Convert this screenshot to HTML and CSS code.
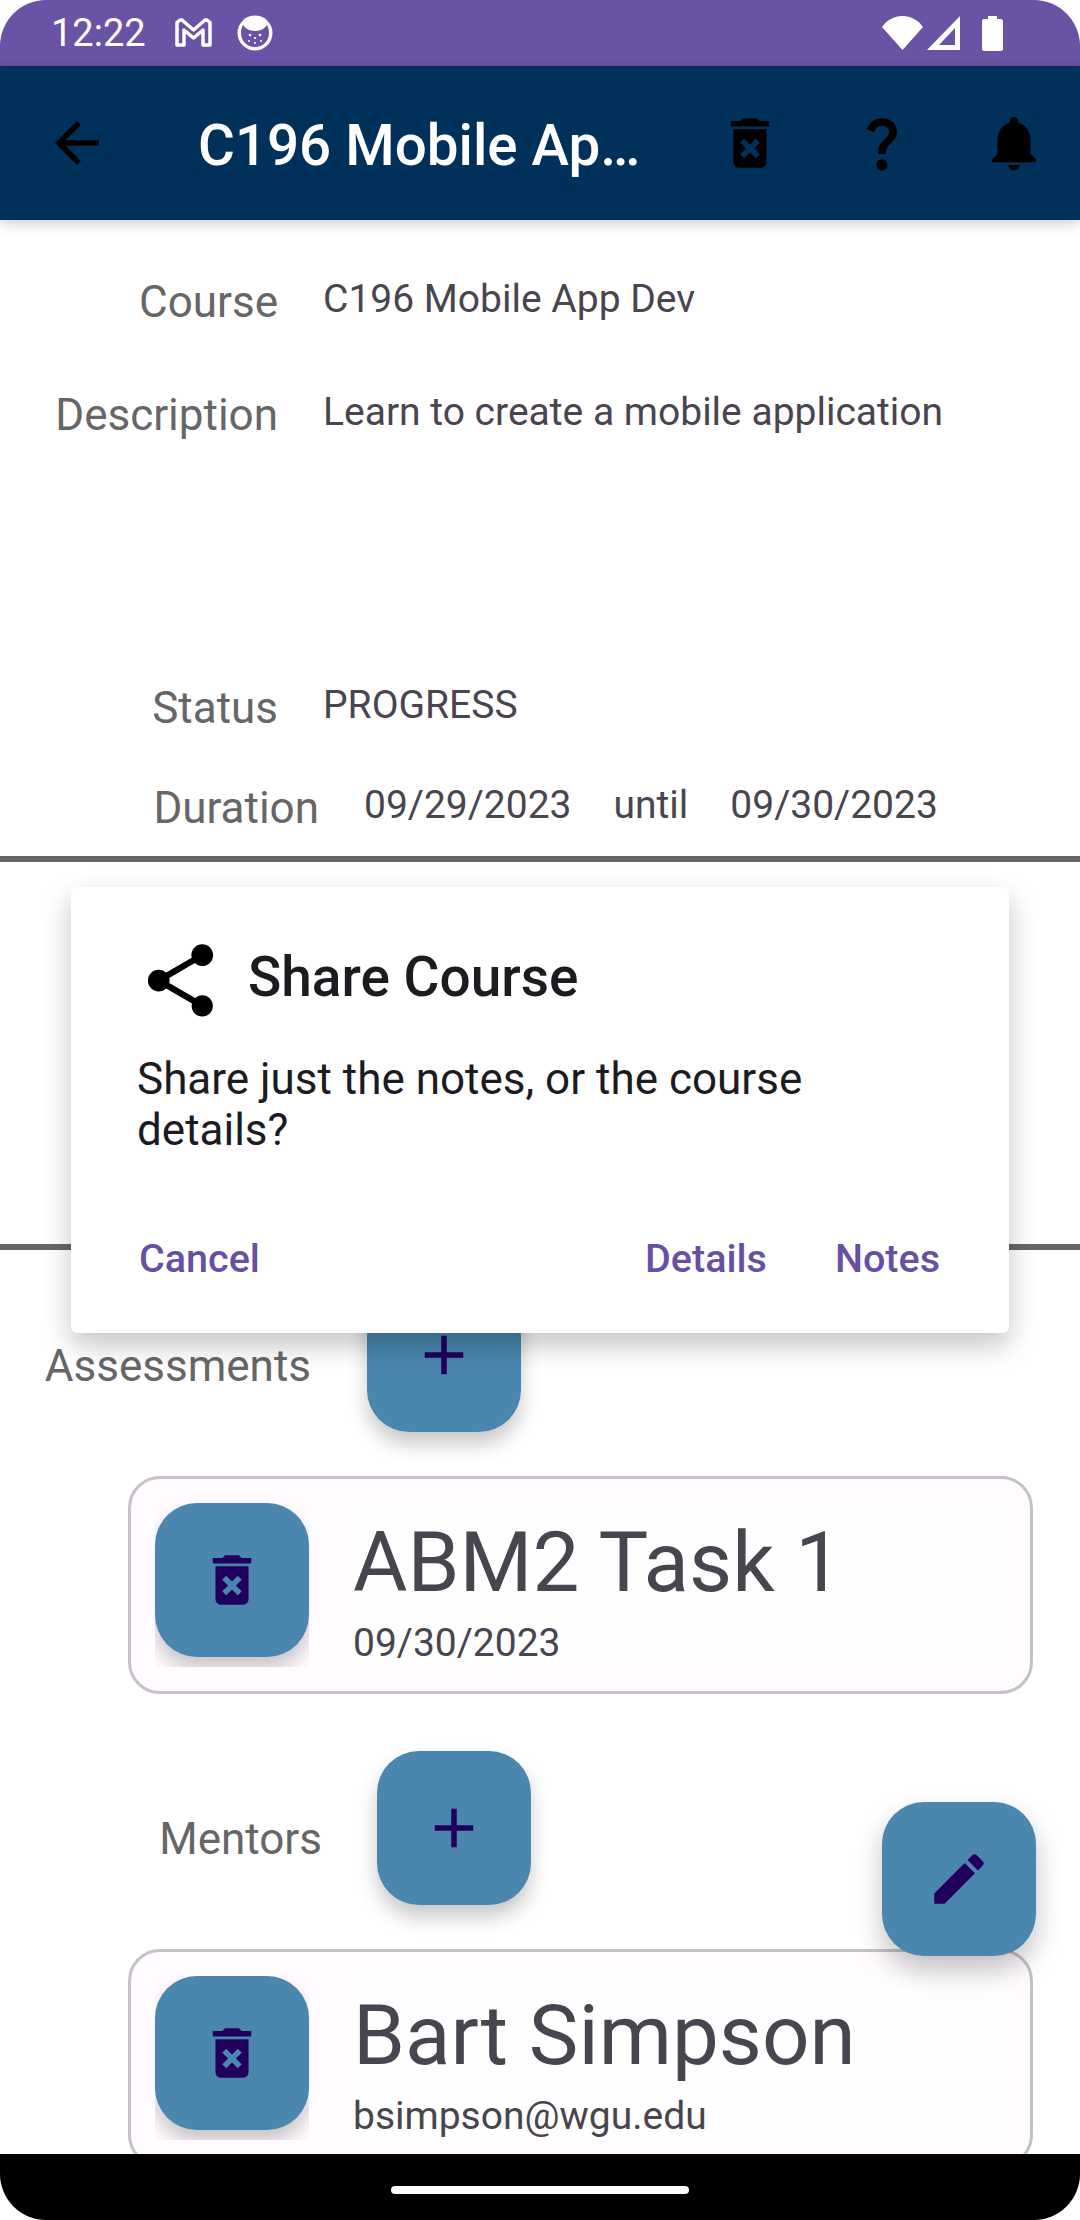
FILE: index.html
```html
<!DOCTYPE html>
<html lang="en">
<head>
  <meta charset="UTF-8">
  <title>C196 Mobile App Dev</title>
  <link rel="stylesheet" href="styles.css">
</head>
<body>

<div class="screen">
  <div class="status-bar">
    <span class="clock">12:22</span>
    <svg class="gmail" viewBox="0 0 37 29"><path d="M2 27V4.500L5 2h2l11.500 10L30 2h2l3 2.500V27h-7V12l-9.500 8L9 12v15z" fill="none" stroke="#fff" stroke-width="3.500" stroke-linejoin="round"/></svg>
    <svg class="cat" viewBox="0 0 36 36"><circle cx="18" cy="18" r="17.500" fill="#fff"/><path d="M4 18c0-3 .7-6 2-8 2 3 6 6 12 6s10-3 12-6c1.300 2 2 5 2 8 0 8-6 14-14 14S4 26 4 18z" fill="#6a52a5"/><circle cx="13" cy="20" r="1.300" fill="#fff"/><circle cx="23" cy="20" r="1.300" fill="#fff"/><circle cx="18" cy="23" r="1.100" fill="#fff"/><circle cx="12" cy="26" r="1" fill="#fff"/><circle cx="24" cy="26" r="1" fill="#fff"/><circle cx="18" cy="28" r="1" fill="#fff"/></svg>
    <span class="status-right">
      <svg class="wifi" viewBox="0 0 41 34"><path d="M0 11C5 4 12 0 20.500 0S36 4 41 11L20.500 34z" fill="#fff"/></svg>
      <svg class="signal" viewBox="0 0 34 34"><path d="M33 0v34H0zM28 12L12 29h16z" fill="#fff" fill-rule="evenodd"/></svg>
      <svg class="battery" viewBox="0 0 21 35"><path d="M6 0h9v3h4c1 0 2 1 2 2v28c0 1-1 2-2 2H2c-1 0-2-1-2-2V5c0-1 1-2 2-2h4z" fill="#fff"/></svg>
    </span>
  </div>

  <header class="toolbar">
    <svg class="icon back" viewBox="0 0 24 24"><path d="M20 11H7.830l5.590-5.590L12 4l-8 8 8 8 1.410-1.410L7.830 13H20v-2z"/></svg>
    <div class="toolbar-title">C196 Mobile Ap…</div>
    <div class="toolbar-action">
      <svg class="icon" viewBox="0 0 24 24"><path d="M6 19c0 1.100.9 2 2 2h8c1.100 0 2-.9 2-2V7H6v12zm2.460-7.120l1.410-1.410L12 12.590l2.120-2.120 1.410 1.410L13.410 14l2.120 2.120-1.410 1.410L12 15.410l-2.120 2.120-1.410-1.410L10.590 14l-2.130-2.120zM15.500 4l-1-1h-5l-1 1H5v2h14V4z"/></svg>
    </div>
    <div class="toolbar-action">
      <svg class="icon" viewBox="0 0 24 24"><path d="M11.070 12.850c.77-1.390 2.250-2.210 3.110-3.440.91-1.290.4-3.700-2.180-3.700-1.690 0-2.520 1.280-2.870 2.340L6.540 6.960C7.250 4.830 9.180 3 11.990 3c2.350 0 3.960 1.070 4.780 2.410.7 1.150 1.110 3.300.03 4.900-1.200 1.770-2.350 2.310-2.970 3.450-.25.46-.35.76-.35 2.240h-2.890c-.01-.78-.13-2.050.48-3.150zM14 20c0 1.100-.9 2-2 2s-2-.9-2-2 .9-2 2-2 2 .9 2 2z"/></svg>
    </div>
    <div class="toolbar-action">
      <svg class="icon" viewBox="0 0 24 24"><path d="M12 22c1.100 0 2-.9 2-2h-4c0 1.100.9 2 2 2zm6-6v-5c0-3.070-1.630-5.640-4.500-6.320V4c0-.83-.67-1.500-1.500-1.500s-1.500.67-1.500 1.500v.68C7.640 5.360 6 7.920 6 11v5l-2 2v1h16v-1l-2-2z"/></svg>
    </div>
  </header>

  <main class="content">
    <section class="details">
      <div class="row">
        <div class="label">Course</div>
        <div class="value">C196 Mobile App Dev</div>
      </div>
      <div class="row row-desc">
        <div class="label">Description</div>
        <div class="value">Learn to create a mobile application</div>
      </div>
      <div class="row">
        <div class="label">Status</div>
        <div class="value">PROGRESS</div>
      </div>
      <div class="row row-duration">
        <div class="label">Duration</div>
        <div class="value">09/29/2023</div>
        <div class="value">until</div>
        <div class="value">09/30/2023</div>
      </div>
    </section>

    <hr class="divider">
    <div class="notes-area"></div>
    <hr class="divider">

    <div class="add-row add-assessment">
      <div class="add-label">Assessments</div>
      <div class="fab">
        <svg class="icon" viewBox="0 0 24 24"><path d="M19 13h-6v6h-2v-6H5v-2h6V5h2v6h6v2z"/></svg>
      </div>
    </div>

    <div class="card">
      <div class="card-fab-wrap">
        <div class="fab">
          <svg class="icon" viewBox="0 0 24 24"><path d="M6 19c0 1.100.9 2 2 2h8c1.100 0 2-.9 2-2V7H6v12zm2.460-7.120l1.410-1.410L12 12.590l2.120-2.120 1.410 1.410L13.410 14l2.120 2.120-1.410 1.410L12 15.410l-2.120 2.120-1.410-1.410L10.590 14l-2.130-2.120zM15.500 4l-1-1h-5l-1 1H5v2h14V4z"/></svg>
        </div>
      </div>
      <div class="card-text">
        <div class="card-title">ABM2 Task 1</div>
        <div class="card-sub">09/30/2023</div>
      </div>
    </div>

    <div class="add-row add-mentor">
      <div class="add-label">Mentors</div>
      <div class="fab">
        <svg class="icon" viewBox="0 0 24 24"><path d="M19 13h-6v6h-2v-6H5v-2h6V5h2v6h6v2z"/></svg>
      </div>
    </div>

    <div class="card">
      <div class="card-fab-wrap">
        <div class="fab">
          <svg class="icon" viewBox="0 0 24 24"><path d="M6 19c0 1.100.9 2 2 2h8c1.100 0 2-.9 2-2V7H6v12zm2.460-7.120l1.410-1.410L12 12.590l2.120-2.120 1.410 1.410L13.410 14l2.120 2.120-1.410 1.410L12 15.410l-2.120 2.120-1.410-1.410L10.590 14l-2.130-2.120zM15.500 4l-1-1h-5l-1 1H5v2h14V4z"/></svg>
        </div>
      </div>
      <div class="card-text">
        <div class="card-title">Bart Simpson</div>
        <div class="card-sub">bsimpson@wgu.edu</div>
      </div>
    </div>
  </main>

  <div class="nav-bar"><div class="nav-pill"></div></div>

  <!-- floating over the page -->
  <div class="fab edit-fab">
    <svg class="icon" viewBox="0 0 24 24"><path d="M3 17.250V21h3.750L17.810 9.940l-3.750-3.750L3 17.250zM20.710 7.040c.39-.39.39-1.020 0-1.410l-2.340-2.340c-.39-.39-1.020-.39-1.410 0l-1.830 1.830 3.750 3.750 1.830-1.830z"/></svg>
  </div>

  <div class="dialog">
    <div class="dialog-head">
      <svg class="share-icon" viewBox="0 0 24 24"><path d="M18 16.080c-.76 0-1.440.3-1.960.77L8.910 12.700c.05-.23.09-.46.09-.7s-.04-.47-.09-.7l7.050-4.110c.54.5 1.250.81 2.040.81 1.660 0 3-1.340 3-3s-1.340-3-3-3-3 1.340-3 3c0 .24.04.47.09.7L8.040 9.810C7.500 9.310 6.790 9 6 9c-1.660 0-3 1.340-3 3s1.340 3 3 3c.79 0 1.500-.31 2.040-.81l7.120 4.160c-.05.21-.08.43-.08.65 0 1.610 1.310 2.920 2.920 2.920 1.610 0 2.920-1.310 2.920-2.920s-1.310-2.920-2.920-2.920z"/></svg>
      <div class="dialog-title">Share Course</div>
    </div>
    <p class="dialog-body">Share just the notes, or the course details?</p>
    <div class="dialog-actions">
      <a class="dialog-btn">Cancel</a>
      <a class="dialog-btn btn-details">Details</a>
      <a class="dialog-btn btn-notes">Notes</a>
    </div>
  </div>
</div>

</body>
</html>
```

FILE: styles.css
```css
:root {
  --purple: #6a52a5;
  --navy: #00315a;
  --fab: #4a86ae;
  --on-fab: #21005d;
  --label: #666666;
  --value: #49454f;
  --ink: #1c1b1f;
  --link: #6750a4;
}

* {
  margin: 0;
  padding: 0;
  box-sizing: border-box;
  font-family: 'Roboto', sans-serif;
}

body {
  background: #fff;
  width: 1080px;
  height: 2220px;
  overflow: hidden;
}

.screen {
  position: relative;
  display: flex;
  flex-direction: column;
  width: 1080px;
  height: 2220px;
  overflow: hidden;
}

/* status bar */
.status-bar {
  display: flex;
  align-items: center;
  height: 66px;
  flex-shrink: 0;
  padding-left: 51px;
  background: var(--purple);
  border-radius: 46px 46px 0 0;
  color: #fff;
}

.clock {
  font-size: 38px;
  margin-top: -1px;
  width: 124px;
}

.gmail {
  width: 37px;
  height: 29px;
  margin-top: -1px;
}

.cat {
  width: 36px;
  height: 36px;
  margin-left: 25px;
}

.status-right {
  display: flex;
  align-items: center;
  margin-left: auto;
  padding-right: 77px;
}

.wifi {
  width: 41px;
  height: 34px;
}

.signal {
  width: 34px;
  height: 34px;
  margin-left: 4px;
}

.battery {
  width: 21px;
  height: 35px;
  margin-left: 21px;
}

/* toolbar */
.toolbar {
  display: flex;
  align-items: center;
  height: 154px;
  flex-shrink: 0;
  background: var(--navy);
  box-shadow: 0 4px 12px rgba(0, 0, 0, 0.18);
  position: relative;
  z-index: 2;
}

.icon {
  width: 66px;
  height: 66px;
  display: block;
  fill: currentColor;
}

.back {
  margin-left: 44px;
}

.toolbar-title {
  margin-left: 88px;
  margin-top: 5px;
  width: 486px;
  color: #fff;
  font-size: 56.500px;
  font-weight: 500;
  white-space: nowrap;
}

.toolbar-action {
  display: flex;
  justify-content: center;
  width: 132px;
  color: #000;
}

/* page */
.content {
  flex: 1;
  overflow: hidden;
}

.details {
  padding-top: 52px;
}

.row {
  display: flex;
  height: 60px;
  margin-bottom: 40px;
  line-height: 54px;
}

.row-desc {
  height: 233px;
  margin-top: 53px;
  margin-bottom: 60px;
}

.row-duration {
  margin-bottom: 0;
}

.label {
  width: 278px;
  margin-right: 45px;
  text-align: right;
  color: var(--label);
  font-size: 44px;
  line-height: 60px;
}

.value {
  color: var(--value);
  font-size: 39px;
  white-space: nowrap;
}

.row-duration .label {
  width: 319px;
  margin-right: 45px;
}

.row-duration .value {
  margin-right: 42px;
}

.divider {
  height: 6px;
  border: 0;
  background: #666666;
}

.details + .divider {
  margin-top: 18px;
}

.notes-area {
  height: 382px;
}

.add-row {
  display: flex;
  margin-top: 28px;
}

.add-mentor {
  margin-top: 57px;
}

.add-label {
  margin-top: 58px;
  text-align: right;
  color: var(--label);
  font-size: 44px;
  line-height: 60px;
}

.add-assessment .add-label {
  width: 311px;
  margin-right: 56px;
}

.add-mentor .add-label {
  width: 322px;
  margin-right: 55px;
}

.fab {
  display: flex;
  align-items: center;
  justify-content: center;
  width: 154px;
  height: 154px;
  flex-shrink: 0;
  background: var(--fab);
  border-radius: 42px;
  color: var(--on-fab);
  box-shadow: 0 12px 20px rgba(0, 0, 0, 0.22);
}

.card {
  display: flex;
  height: 218px;
  margin: 44px 47px 0 128px;
  padding: 24px 18px 0 24px;
  background: #fffbfe;
  border: 3px solid #c5c1c8;
  border-radius: 32px;
}

.card-fab-wrap {
  width: 154px;
  height: 164px;
  flex-shrink: 0;
  overflow: hidden;
}

.card-text {
  flex: 1;
  height: 164px;
  margin-left: 41px;
  padding-left: 3px;
  background: #fffeff;
}

.card-title {
  font-size: 83.500px;
  line-height: 120px;
  color: var(--value);
  white-space: nowrap;
}

.card-sub {
  font-size: 39px;
  line-height: 40px;
  color: var(--value);
}

/* overlays */
.nav-bar {
  display: flex;
  justify-content: center;
  height: 66px;
  flex-shrink: 0;
  padding-top: 32px;
  background: #000;
  border-radius: 0 0 46px 46px;
}

.nav-pill {
  width: 298px;
  height: 8px;
  margin-left: -1px;
  background: #fff;
  border-radius: 4px;
}

.edit-fab {
  position: absolute;
  left: 882px;
  top: 1802px;
  box-shadow: 0 14px 28px rgba(0, 0, 0, 0.24);
}

.dialog {
  position: absolute;
  left: 71px;
  top: 887px;
  width: 938px;
  height: 446px;
  padding: 50px 69px 0 66px;
  background: #fff;
  border-radius: 6px;
  box-shadow: 0 12px 28px rgba(0, 0, 0, 0.24);
}

.dialog-head {
  display: flex;
  align-items: center;
  height: 87px;
}

.share-icon {
  width: 87px;
  height: 87px;
  margin-right: 24px;
  flex-shrink: 0;
}

.dialog-title {
  padding-bottom: 8px;
  font-size: 55px;
  font-weight: 500;
  color: var(--ink);
}

.dialog-body {
  margin-top: 30px;
  width: 700px;
  font-size: 44px;
  line-height: 51px;
  color: var(--ink);
}

.dialog-actions {
  display: flex;
  margin-top: 79px;
}

.dialog-btn {
  font-size: 39.500px;
  font-weight: 500;
  color: var(--link);
  padding-left: 2px;
}

.btn-details {
  margin-left: auto;
}

.btn-notes {
  margin-left: 66px;
}
```
